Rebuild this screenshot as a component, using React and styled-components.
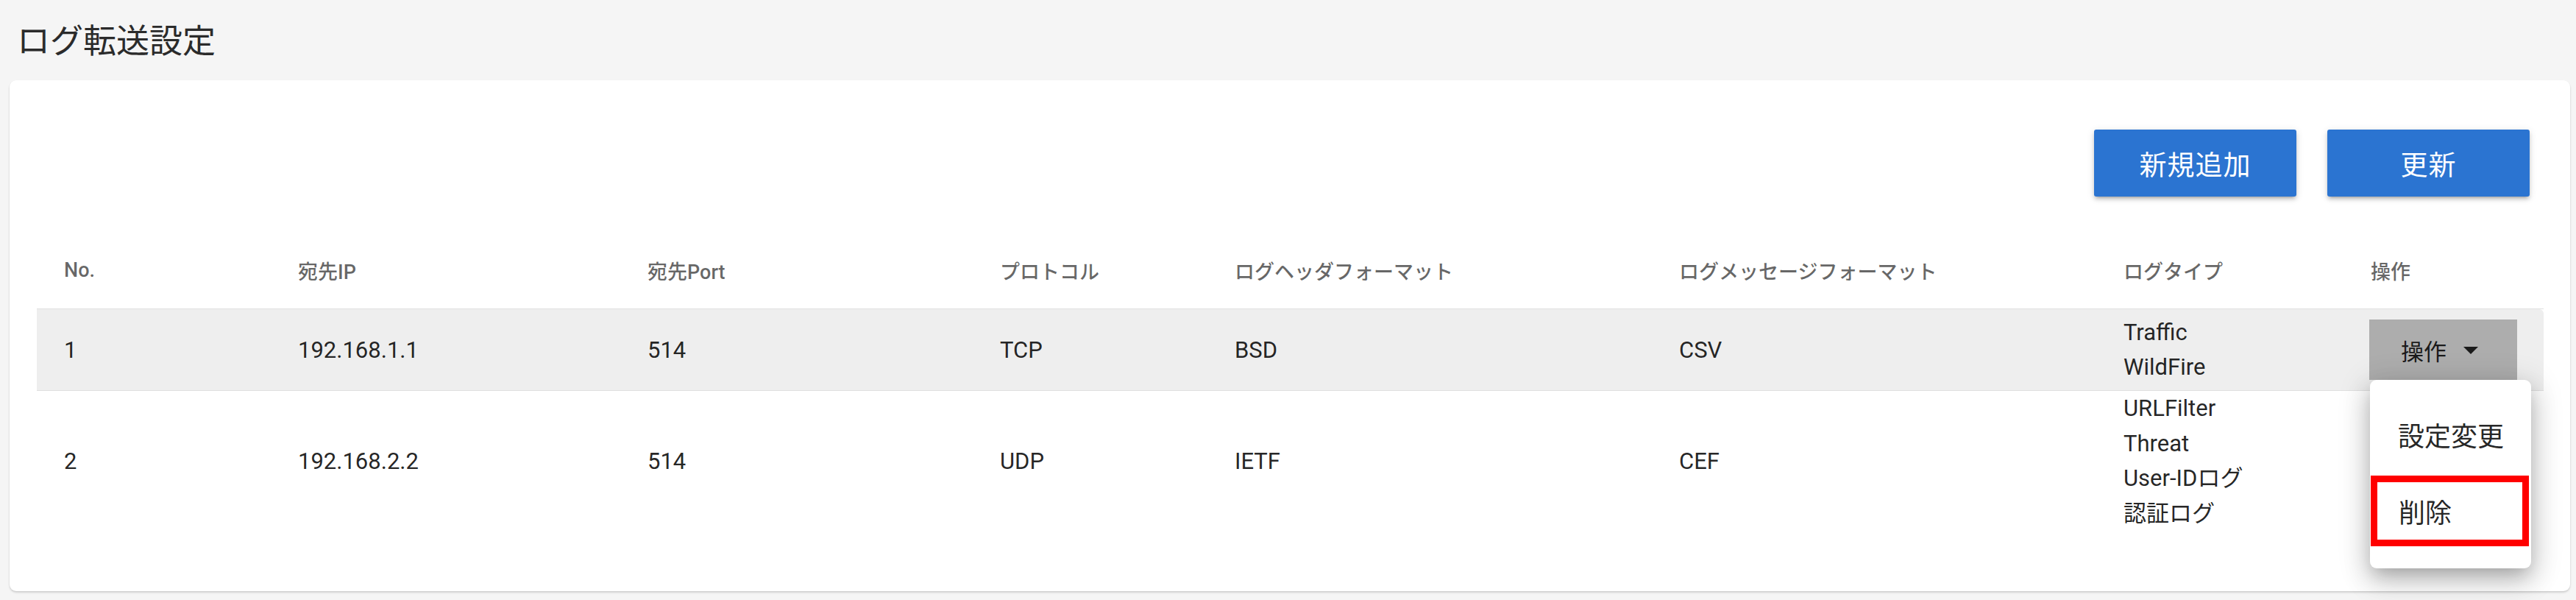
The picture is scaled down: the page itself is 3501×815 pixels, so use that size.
import React from 'react';
import styled, { createGlobalStyle } from 'styled-components';

const columns = '318px 475px 479px 319px 604px 604px 336px 272px';

const rows = [
  {
    no: 1,
    ip: '192.168.1.1',
    port: '514',
    protocol: 'TCP',
    header: 'BSD',
    message: 'CSV',
    types: ['Traffic', 'WildFire'],
    active: true,
  },
  {
    no: 2,
    ip: '192.168.2.2',
    port: '514',
    protocol: 'UDP',
    header: 'IETF',
    message: 'CEF',
    types: ['URLFilter', 'Threat', 'User-IDログ', '認証ログ'],
  },
];

const headers = [
  'No.',
  '宛先IP',
  '宛先Port',
  'プロトコル',
  'ログヘッダフォーマット',
  'ログメッセージフォーマット',
  'ログタイプ',
  '操作',
];

export default function App() {
  return (
    <>
      <GlobalStyle />
      <Page>
        <Title>ログ転送設定</Title>
        <Card>
          <Toolbar>
            <PrimaryButton>新規追加</PrimaryButton>
            <PrimaryButton>更新</PrimaryButton>
          </Toolbar>
          <HeaderRow>
            {headers.map((h) => (
              <HeaderCell key={h}>{h}</HeaderCell>
            ))}
          </HeaderRow>
          {rows.map((row) => (
            <BodyRow key={row.no} active={row.active}>
              <Cell>{row.no}</Cell>
              <Cell>{row.ip}</Cell>
              <Cell>{row.port}</Cell>
              <Cell>{row.protocol}</Cell>
              <Cell>{row.header}</Cell>
              <Cell>{row.message}</Cell>
              <Cell>
                <TypeList>
                  {row.types.map((t) => (
                    <li key={t}>{t}</li>
                  ))}
                </TypeList>
              </Cell>
              <Cell>
                {row.active && (
                  <MenuAnchor>
                    <ActionButton>
                      操作
                      <svg viewBox="0 0 24 24" width="48" height="48">
                        <path d="M7 10l5 5 5-5z" fill="#1a1a1a" />
                      </svg>
                    </ActionButton>
                    <Menu>
                      <MenuItem height={112}>設定変更</MenuItem>
                      <MenuItem height={96} marked>
                        削除
                      </MenuItem>
                    </Menu>
                  </MenuAnchor>
                )}
              </Cell>
            </BodyRow>
          ))}
        </Card>
      </Page>
    </>
  );
}

const GlobalStyle = createGlobalStyle`
  html, body {
    margin: 0;
    padding: 0;
    background: #f5f5f5;
  }
  body {
    font-family: Roboto, "Noto Sans CJK JP", sans-serif;
    color: rgba(0, 0, 0, 0.87);
  }
`;

const Page = styled.div`
  width: 3501px;
  height: 815px;
  box-sizing: border-box;
  padding: 0 8px 0 13px;
  background: #f5f5f5;
  overflow: hidden;
`;

const Title = styled.h1`
  margin: 0 0 5px;
  padding-left: 10px;
  height: 104px;
  display: flex;
  align-items: center;
  font-size: 45px;
  font-weight: 400;
  color: #2b2b2b;
`;

const Card = styled.div`
  box-sizing: border-box;
  height: 694px;
  padding: 67px 36px 0 37px;
  background: #fff;
  border-radius: 9px;
  box-shadow: 0 2px 3px rgba(0, 0, 0, 0.12), 0 1px 2px rgba(0, 0, 0, 0.08);
`;

const Toolbar = styled.div`
  display: flex;
  justify-content: flex-end;
  gap: 42px;
  padding-right: 19px;
  margin-bottom: 48px;
`;

const PrimaryButton = styled.button`
  width: 275px;
  height: 91px;
  border: 0;
  border-radius: 3px;
  background: #2b74d1;
  color: #fff;
  font-family: inherit;
  font-size: 37px;
  letter-spacing: 1px;
  box-shadow: 0 5px 3px -4px rgba(0, 0, 0, 0.2), 0 4px 5px 0 rgba(0, 0, 0, 0.14),
    0 2px 11px 0 rgba(0, 0, 0, 0.12);
`;

const HeaderRow = styled.div`
  display: grid;
  grid-template-columns: ${columns};
  height: 104px;
  align-items: center;
  border-bottom: 1px solid #e0e0e0;
`;

const HeaderCell = styled.div`
  padding-left: 37px;
  font-size: 27px;
  font-weight: 500;
  color: rgba(0, 0, 0, 0.6);
  white-space: nowrap;
`;

const BodyRow = styled.div`
  display: grid;
  grid-template-columns: ${columns};
  align-items: center;
  min-height: ${({ active }) => (active ? '110px' : '0')};
  background: ${({ active }) => (active ? '#eeeeee' : 'transparent')};
  border-bottom: ${({ active }) => (active ? '1px solid #e0e0e0' : '0')};
  border-radius: 0 6px 0 0;
`;

const Cell = styled.div`
  padding-left: 37px;
  font-size: 31px;
  white-space: nowrap;
`;

const TypeList = styled.ul`
  margin: 0;
  padding: 0;
  list-style: none;
  line-height: 47.5px;
`;

const MenuAnchor = styled.div`
  position: relative;
  width: 201px;
  margin-left: -2px;
`;

const ActionButton = styled.button`
  display: flex;
  align-items: center;
  gap: 9px;
  width: 201px;
  height: 82px;
  padding: 0 39px 0 43px;
  border: 0;
  background: #adadad;
  color: rgba(0, 0, 0, 0.87);
  font-family: inherit;
  font-size: 31px;

  svg {
    flex: none;
  }
`;

const Menu = styled.div`
  position: absolute;
  top: 100%;
  left: 1px;
  width: 219px;
  box-sizing: border-box;
  padding: 18px 0 30px;
  background: #fff;
  border-radius: 9px;
  box-shadow: 0 11px 22px -7px rgba(0, 0, 0, 0.2), 0 18px 36px 2px rgba(0, 0, 0, 0.14),
    0 7px 40px 7px rgba(0, 0, 0, 0.12);
  z-index: 2;
`;

const MenuItem = styled.div`
  box-sizing: border-box;
  display: flex;
  align-items: center;
  height: ${({ height }) => height}px;
  padding-left: ${({ marked }) => (marked ? '29px' : '38px')};
  border: ${({ marked }) => (marked ? '9px solid #ff0000' : '0')};
  margin: ${({ marked }) => (marked ? '0 3px 0 1px' : '0')};
  font-size: 36px;
  color: rgba(0, 0, 0, 0.87);
`;
